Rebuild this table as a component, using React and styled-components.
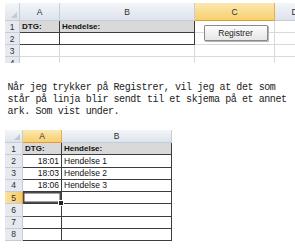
import React from "react";
import styled, { createGlobalStyle, css } from "styled-components";

const GlobalStyle = createGlobalStyle`
  html, body {
    margin: 0;
    padding: 0;
    background: #ffffff;
    overflow: hidden;
  }
  body {
    font-family: "Liberation Sans", Arial, sans-serif;
  }
`;

const DARK = "#3c3c3c";
const GRID = "#d9d9d9";
const HEAD_LINE = "#c5cdd8";

const Page = styled.div`
  width: 295px;
  height: 250px;
  padding: 3px 0 0 5px;
  box-sizing: border-box;
  display: flex;
  flex-direction: column;
`;

const Sheet = styled.div`
  display: grid;
  grid-template-columns: ${p => p.$cols};
  grid-template-rows: ${p => p.$rows};
  height: ${p => p.$height}px;
  overflow: hidden;
  font-size: 8.5px;
  color: #111;
  flex-shrink: 0;
`;

const Corner = styled.div`
  background: linear-gradient(#f4f6f9, #dfe4ea);
  border-right: 1px solid ${HEAD_LINE};
  border-bottom: 1px solid ${HEAD_LINE};
  box-sizing: border-box;
  position: relative;
  &::after {
    content: "";
    position: absolute;
    right: 2px;
    bottom: 2px;
    border-left: 6px solid transparent;
    border-bottom: 6px solid #c3c9d1;
  }
`;

const ColHeader = styled.div`
  box-sizing: border-box;
  display: flex;
  align-items: center;
  justify-content: center;
  font-size: 8.5px;
  color: #2f2f2f;
  border-right: 1px solid ${HEAD_LINE};
  border-bottom: 1px solid ${HEAD_LINE};
  background: linear-gradient(#f3f6fa, #dde3ec);
  ${p => p.$selected && css`
    background: linear-gradient(#fce8b2, #f7cf6e);
    border-right-color: #e8b04d;
    border-bottom: 1px solid #e59a3a;
  `}
`;

const RowHeader = styled.div`
  box-sizing: border-box;
  display: flex;
  align-items: center;
  justify-content: center;
  font-size: 8.5px;
  color: #2f2f2f;
  background: #e6eaf0;
  border-right: 1px solid ${HEAD_LINE};
  border-bottom: 1px solid ${HEAD_LINE};
  ${p => p.$selected && css`
    background: linear-gradient(90deg, #fbe29f, #f6cc6a);
    border-right: 1px solid #e59a3a;
  `}
`;

const Cell = styled.div`
  box-sizing: border-box;
  position: relative;
  display: flex;
  align-items: center;
  justify-content: ${p => (p.$align === "right" ? "flex-end" : "flex-start")};
  padding: 0 2px;
  white-space: nowrap;
  font-weight: ${p => (p.$bold ? "bold" : "normal")};
  font-size: ${p => (p.$bold ? "8px" : "8.5px")};
  background: ${p => (p.$fill ? "#d9d9d9" : "#ffffff")};
  border-right: 1px solid ${p => (p.$dark ? DARK : GRID)};
  border-bottom: 1px solid ${p => (p.$dark ? DARK : GRID)};
  ${p => p.$active && css`
    box-shadow: inset 0 0 0 1.5px #4a4a4a;
  `}
`;

const FillHandle = styled.span`
  position: absolute;
  right: -3px;
  bottom: -3px;
  width: 4px;
  height: 4px;
  background: #222;
  border: 1px solid #fff;
  z-index: 2;
`;

/* C1:C2 holds the form button that sits over the grid */
const ButtonCell = styled.div`
  grid-column: 4;
  grid-row: 2 / span 2;
  box-sizing: border-box;
  display: flex;
  align-items: center;
  justify-content: center;
  padding: 1px 0 0 2px;
  border-right: 1px solid ${GRID};
  border-bottom: 1px solid ${GRID};
  background: linear-gradient(transparent 11px, ${GRID} 11px, ${GRID} 12px, transparent 12px);
`;

const SheetButton = styled.button`
  width: 64px;
  height: 16px;
  padding: 0;
  margin: 0;
  font-family: "Liberation Sans", Arial, sans-serif;
  font-size: 8.5px;
  color: #1e1e1e;
  background: linear-gradient(#fdfdfd, #e6e6e6);
  border: 1px solid #8a8a8a;
  border-radius: 1px;
  box-shadow: 1px 1px 0 #b5b5b5;
`;

const Note = styled.p`
  margin: 19px 0 12px 2.5px;
  font-family: "Liberation Mono", "Courier New", monospace;
  font-size: 10px;
  letter-spacing: -0.42px;
  line-height: 12px;
  color: #222;
  width: 290px;
`;

const cols = ["A", "B", "C", "D"];

function TopSheet() {
  const rows = [1, 2, 3, 4];
  return (
    <Sheet $cols="15px 40px 135px 80px 40px" $rows="18px 12px 12px 12px 12px" $height={60}>
      <Corner />
      {cols.map(c => (
        <ColHeader key={c} $selected={c === "C"}>{c}</ColHeader>
      ))}
      <ButtonCell>
        <SheetButton>Registrer</SheetButton>
      </ButtonCell>
      {rows.map(r => (
        <React.Fragment key={r}>
          <RowHeader>{r}</RowHeader>
          <Cell $fill={r === 1} $bold={r === 1} $dark={r <= 2}>{r === 1 ? "DTG:" : ""}</Cell>
          <Cell $fill={r === 1} $bold={r === 1} $dark={r <= 2}>{r === 1 ? "Hendelse:" : ""}</Cell>
          {r > 2 && <Cell />}
          <Cell />
        </React.Fragment>
      ))}
    </Sheet>
  );
}

const log = [
  { time: "18:01", text: "Hendelse 1" },
  { time: "18:03", text: "Hendelse 2" },
  { time: "18:06", text: "Hendelse 3" },
];

function LogSheet() {
  const rows = [1, 2, 3, 4, 5, 6, 7, 8];
  return (
    <Sheet $cols="18px 39px 110px" $rows="13px repeat(8, 12.25px)" $height={111}>
      <Corner />
      <ColHeader $selected>A</ColHeader>
      <ColHeader>B</ColHeader>
      {rows.map(r => {
        const entry = log[r - 2];
        return (
          <React.Fragment key={r}>
            <RowHeader $selected={r === 5}>{r}</RowHeader>
            <Cell $fill={r === 1} $bold={r === 1} $dark $align={r === 1 ? "left" : "right"} $active={r === 5}>
              {r === 1 ? "DTG:" : entry ? entry.time : ""}
              {r === 5 && <FillHandle />}
            </Cell>
            <Cell $fill={r === 1} $bold={r === 1} $dark>
              {r === 1 ? "Hendelse:" : entry ? entry.text : ""}
            </Cell>
          </React.Fragment>
        );
      })}
    </Sheet>
  );
}

export default function App() {
  return (
    <>
      <GlobalStyle />
      <Page>
        <TopSheet />
        <Note>
          Når jeg trykker på Registrer, vil jeg at det som står på linja blir sendt til et skjema på et annet ark. Som vist under.
        </Note>
        <LogSheet />
      </Page>
    </>
  );
}
